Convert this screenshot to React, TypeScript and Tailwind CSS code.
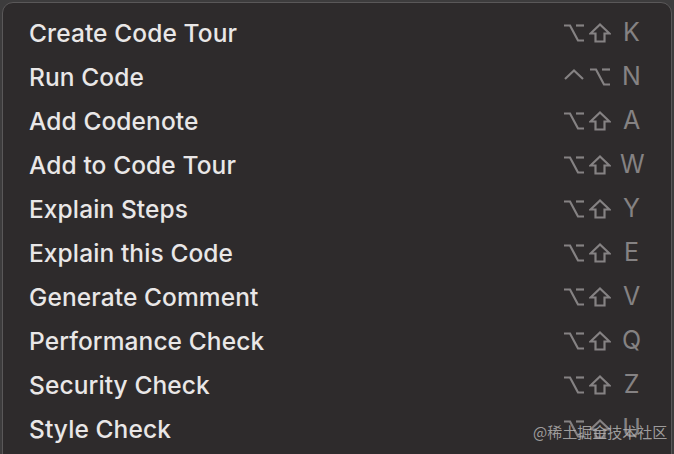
import React from 'react';

type Key = 'opt' | 'shift' | 'ctrl';

const items: { label: string; keys: Key[]; letter: string }[] = [
  { label: 'Create Code Tour', keys: ['opt', 'shift'], letter: 'K' },
  { label: 'Run Code', keys: ['ctrl', 'opt'], letter: 'N' },
  { label: 'Add Codenote', keys: ['opt', 'shift'], letter: 'A' },
  { label: 'Add to Code Tour', keys: ['opt', 'shift'], letter: 'W' },
  { label: 'Explain Steps', keys: ['opt', 'shift'], letter: 'Y' },
  { label: 'Explain this Code', keys: ['opt', 'shift'], letter: 'E' },
  { label: 'Generate Comment', keys: ['opt', 'shift'], letter: 'V' },
  { label: 'Performance Check', keys: ['opt', 'shift'], letter: 'Q' },
  { label: 'Security Check', keys: ['opt', 'shift'], letter: 'Z' },
  { label: 'Style Check', keys: ['opt', 'shift'], letter: 'U' },
];

function KeyIcon({ k }: { k: Key }) {
  if (k === 'opt')
    return (
      <svg width="22" height="20" viewBox="0 0 22 20" fill="none" stroke="currentColor" strokeWidth="2.2" strokeLinejoin="miter">
        <path d="M1 2.5H7L15 17.5H21" />
        <path d="M13 2.5H21" />
      </svg>
    );
  if (k === 'shift')
    return (
      <svg width="22" height="20" viewBox="0 0 22 20" fill="none" stroke="currentColor" strokeWidth="2.2" strokeLinejoin="miter">
        <path d="M11 1.5L20.5 10.5H15.5V18.5H6.5V10.5H1.5Z" />
      </svg>
    );
  return (
    <svg width="22" height="20" viewBox="0 0 22 20" fill="none" stroke="currentColor" strokeWidth="2.2">
      <path d="M2 12L11 3.5L20 12" />
    </svg>
  );
}

export default function App() {
  return (
    <div className="w-[674px] h-[454px] overflow-hidden bg-[#3d3c3d] pt-[2px] px-[2px]" style={{ fontFamily: 'Inter, "Noto Sans", sans-serif' }}>
      <div className="relative h-[460px] rounded-t-[11px] border border-[#5a5859] bg-[#2e2b2c] pt-[8px]">
        {items.map((it) => (
          <div key={it.label} className="flex h-[44px] items-center pl-[26px] pr-[28px]">
            <span className="flex-1 text-[24.5px] font-medium tracking-[0.1px] text-[#e9e7e7]">{it.label}</span>
            <div className="flex items-center text-[#858283]">
              {it.keys.map((k, i) => (
                <span key={i} className="flex w-[26px] justify-start">
                  <KeyIcon k={k} />
                </span>
              ))}
              <span className="ml-[5px] w-[23px] text-center text-[25px]">{it.letter}</span>
            </div>
          </div>
        ))}
        <div className="absolute left-[530px] top-[418px] text-[15px] text-[#bdbbbb]/80" style={{ fontFamily: '"Noto Sans CJK SC", sans-serif' }}>
          @稀土掘金技术社区
        </div>
      </div>
    </div>
  );
}
